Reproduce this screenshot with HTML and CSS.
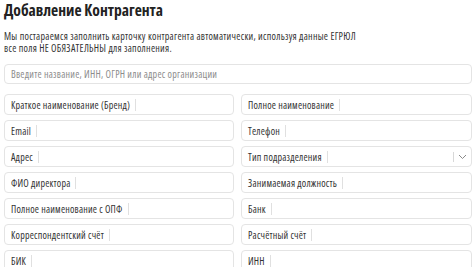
FILE: index.html
```html
<!DOCTYPE html>
<html lang="ru">
<head>
    <meta charset="UTF-8">
    <meta name="viewport" content="width=device-width, initial-scale=1.0">
    <title>Добавление Контрагента</title>
    <link rel="stylesheet" href="styles.css">
</head>
<body>
    <div class="container">
        <h1>Добавление Контрагента</h1>
        <p class="intro">Мы постараемся заполнить карточку контрагента автоматически, используя данные ЕГРЮЛ<br>все поля НЕ ОБЯЗАТЕЛЬНЫ для заполнения.</p>

        <input class="search" type="text" placeholder="Введите название, ИНН, ОГРН или адрес организации">

        <div class="fields">
            <label class="field"><span class="field-name">Краткое наименование (Бренд)</span><input type="text"></label>
            <label class="field"><span class="field-name">Полное наименование</span><input type="text"></label>
            <label class="field"><span class="field-name">Email</span><input type="text"></label>
            <label class="field"><span class="field-name">Телефон</span><input type="text"></label>
            <label class="field"><span class="field-name">Адрес</span><input type="text"></label>
            <label class="field field-select">
                <span class="field-name">Тип подразделения</span>
                <input type="text">
                <span class="arrow">
                    <svg width="9" height="6" viewBox="0 0 9 6"><path d="M1 1 L4.5 4.5 L8 1" fill="none" stroke="#8a8a8a" stroke-width="1"/></svg>
                </span>
            </label>
            <label class="field"><span class="field-name">ФИО директора</span><input type="text"></label>
            <label class="field"><span class="field-name">Занимаемая должность</span><input type="text"></label>
            <label class="field"><span class="field-name">Полное наименование с ОПФ</span><input type="text"></label>
            <label class="field"><span class="field-name">Банк</span><input type="text"></label>
            <label class="field"><span class="field-name">Корреспондентский счёт</span><input type="text"></label>
            <label class="field"><span class="field-name">Расчётный счёт</span><input type="text"></label>
            <label class="field"><span class="field-name">БИК</span><input type="text"></label>
            <label class="field"><span class="field-name">ИНН</span><input type="text"></label>
        </div>
    </div>
</body>
</html>
```

FILE: styles.css
```css
body {
    font-family: "Open Sans", "Liberation Sans", sans-serif;
    font-stretch: 75%;
    background-color: #ffffff;
    color: #333333;
    margin: 0;
    padding: 0 4px;
}
.container h1 {
    margin: 0;
    font-size: 15.6px;
    line-height: 20px;
    color: #222222;
}
.intro {
    margin: 10px 0 0;
    font-size: 10px;
    line-height: 12px;
    letter-spacing: 0.27px;
    color: #333333;
}
.search {
    display: block;
    box-sizing: border-box;
    width: 100%;
    height: 20px;
    margin-top: 10px;
    padding: 0 6px;
    border: 1px solid #e4e4e4;
    border-radius: 4px;
    font-family: inherit;
    font-stretch: 75%;
    font-size: 10px;
    letter-spacing: 0.24px;
    color: #333333;
    outline: none;
}
.search::placeholder {
    color: #8c8c8c;
}
.fields {
    display: grid;
    grid-template-columns: 230px 231px;
    column-gap: 7px;
    row-gap: 5px;
    margin-top: 10px;
}
.field {
    display: flex;
    align-items: center;
    box-sizing: border-box;
    height: 21px;
    padding: 0 6px;
    border: 1px solid #e4e4e4;
    border-radius: 4px;
    font-size: 10px;
    letter-spacing: 0.2px;
    color: #333333;
}
.field-select {
    padding-right: 4px;
}
.field-name {
    white-space: nowrap;
    padding-right: 5px;
    border-right: 1px solid #e0e0e0;
    line-height: 12px;
}
.field input {
    flex: 1;
    min-width: 0;
    border: none;
    outline: none;
    padding: 0 4px;
    font-family: inherit;
    font-size: 10px;
    background: transparent;
}
.arrow {
    display: flex;
    align-items: center;
    padding-left: 4px;
    border-left: 1px solid #d8d8d8;
    height: 10px;
}
```
